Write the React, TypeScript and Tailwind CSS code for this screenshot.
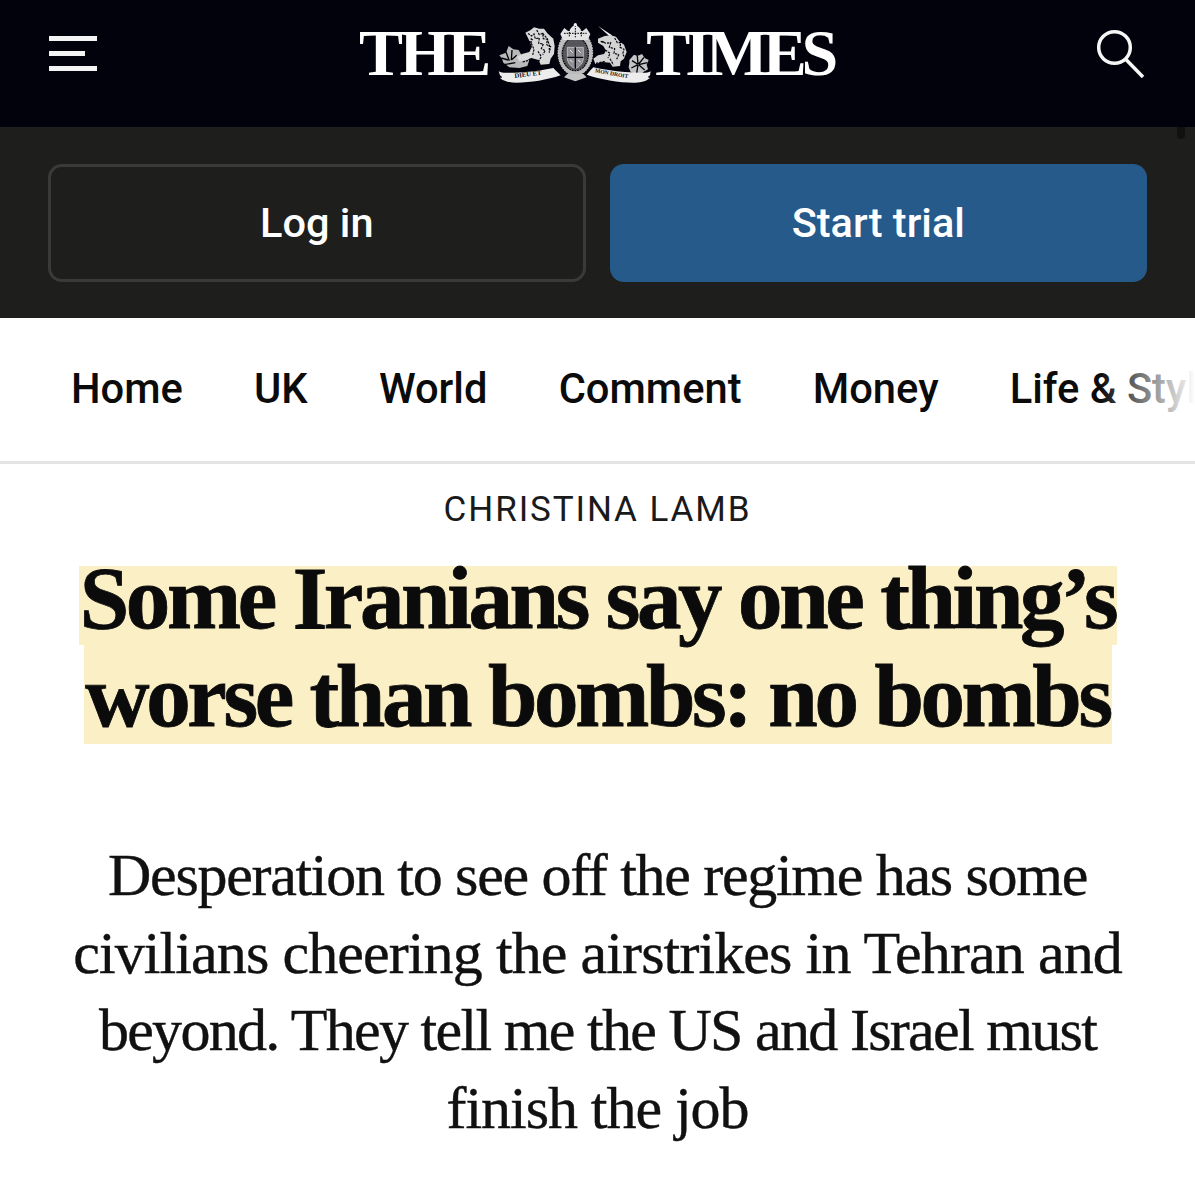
const NAV = ["Home", "UK", "World", "Comment", "Money", "Life & Style"];

const STANDFIRST = [
  { text: "Desperation to see off the regime has some", tracking: "tracking-[-1.3px]" },
  { text: "civilians cheering the airstrikes in Tehran and", tracking: "tracking-[-0.9px]" },
  { text: "beyond. They tell me the US and Israel must", tracking: "tracking-[-1.7px]" },
  { text: "finish the job", tracking: "tracking-[-1.05px]" },
];

// Royal crest between THE and TIMES, drawn at 3x so the coordinates line up with the zoomed reference.
function Crest() {
  return (
    <svg width="165" height="70" viewBox="0 0 495 210" className="ml-[4px] mr-[-10.5px] shrink-0">
      {/* rose */}
      <path d="M22 112l20-8 8-20 14 10 16 2 10 18 22 12-6 18-24 6-30-2-18-14-4-12z" fill="#b9b9b9" />
      <path d="M28 120l20 6M42 102l10 26M60 96l-2 30M74 112l-16 14M36 140l34-6" stroke="#02020c" strokeWidth="4" fill="none" />
      {/* lion */}
      <path d="M100 44l16-8 10-8 16 4 14 0 10 14 18 16 4 22-2 24-10 14-4 16-26 2-6-14-22-6-16 6-20 4-8-14 16-8 22-6 8-16-8-18-8-16z" fill="#d9d9d9" />
      <path d="M108 46l10 8 8-6 4 14 12-2-2 16 14 2-6 14 12 6-8 12M134 36l8 14 10-4 2 16 12 2-2 16 12 6-4 16M152 46l14 16 6 20 0 22M118 76l8 18-4 18M138 100l10 16-8 14M92 132l30-8" stroke="#02020c" strokeWidth="3.5" strokeDasharray="7 3" fill="none" />
      <path d="M116 62l6 4M108 72h12" stroke="#02020c" strokeWidth="4" />
      {/* shield and garter */}
      <ellipse cx="250" cy="104" rx="52" ry="68" fill="#bcbcbc" />
      <ellipse cx="250" cy="104" rx="52" ry="68" fill="none" stroke="#f0f0f0" strokeWidth="3" strokeDasharray="4 4" />
      <ellipse cx="250" cy="108" rx="39" ry="50" fill="#55555a" stroke="#02020c" strokeWidth="4" />
      <ellipse cx="250" cy="108" rx="39" ry="50" fill="none" stroke="#e6e6e6" strokeWidth="2" strokeDasharray="3 5" />
      <path d="M226 88h48v32c0 16-12 26-24 32-12-6-24-16-24-32z" fill="#8e8e93" stroke="#dcdcdc" strokeWidth="2" />
      <path d="M250 88v64M226 118h48" stroke="#02020c" strokeWidth="4" />
      <path d="M234 96l8 8M258 96l8 8M234 126l8 6M258 126l8 6" stroke="#e8e8e8" strokeWidth="3" />
      <path d="M205 48l12-18 12 10 10-12 11-10 11 10 10 12 12-10 12 18-8 18h-74z" fill="#e4e4e4" />
      <path d="M216 46h68M232 34v24M250 22v36M268 34v24" stroke="#02020c" strokeWidth="3" strokeDasharray="5 3" />
      <circle cx="250" cy="20" r="5" fill="#f0f0f0" />
      <path d="M216 178l34 12 34-12-10-10h-48z" fill="#c4c4c4" />
      {/* unicorn */}
      <path d="M318 24l42 28-4 6z" fill="#f0f0f0" />
      <path d="M318 62l20-8 18-2 16 4 10 14 14 10 8 22-8 20-10 8-2 14-22 2-8-12-22-2-22 6-6-16 14-10 18-4 6-10-8-14-16-10z" fill="#d4d4d4" />
      <path d="M326 70l16 6 14-2-4 14 16 4-2 14 14 4-6 14M368 60l8 14 10 0-2 14 12 6-4 14 6 10M340 96l14 10-6 14M312 136l28-6M354 122l10 18" stroke="#02020c" strokeWidth="3.5" strokeDasharray="7 3" fill="none" />
      <path d="M330 70l6 3" stroke="#02020c" strokeWidth="4" />
      {/* thistle */}
      <path d="M412 126l14-16 10 4 14-6 8 12 12 6-6 14 4 14-14 8-10 12-14-6-14-6-6-14 2-14z" fill="#c4c4c4" />
      <path d="M420 128l16 10M436 114l2 24M456 118l-16 20M466 134l-26 6M458 156l-18-16M434 166l4-26M418 150l20-10" stroke="#02020c" strokeWidth="4" fill="none" />
      {/* motto ribbons */}
      <path d="M20 160c10 6 24 4 36 4 30 0 70-2 128-14l8 8 14 14c-40 14-90 22-132 22-18 0-36-2-50-14 8-2 8-2 0-8z" fill="#ededed" />
      <path d="M476 160c-10 6-24 4-36 4-30 0-78-4-136-16l-8 8-12 14c40 14 98 24 140 24 18 0 36-2 50-14-8-2-8-2 0-8z" fill="#ededed" />
      <text x="68" y="180" fontFamily="Liberation Serif" fontSize="20" fontWeight="700" fill="#111" transform="rotate(-7 68 180)">DIEU ET</text>
      <text x="308" y="163" fontFamily="Liberation Serif" fontSize="17" fontWeight="700" fill="#111" transform="rotate(10 308 163)">MON DROIT</text>
    </svg>
  );
}

export default function App() {
  return (
    <div className="relative h-[1200px] w-[1195px] overflow-hidden bg-white font-['Roboto',sans-serif]">
      <header className="flex h-[127px] items-center justify-between bg-[#02020c] pb-[21px] pl-[49px] pr-[50px]">
        <div className="flex w-[48px] flex-col gap-[10px]">
          <span className="h-[5px] w-full bg-[#f4f4f4]" />
          <span className="h-[5px] w-[36px] bg-[#f4f4f4]" />
          <span className="h-[5px] w-full bg-[#f4f4f4]" />
        </div>
        <div className="flex items-center font-['Liberation_Serif',serif] text-[66px] font-bold leading-none text-white">
          <span className="tracking-[-3.5px]">THE</span>
          <Crest />
          <span className="tracking-[-5.2px]">TIMES</span>
        </div>
        <svg width="50" height="50" viewBox="0 0 50 50" fill="none" stroke="#f6f6f6" strokeWidth="3.5">
          <circle cx="19.5" cy="19.5" r="15.8" />
          <path d="M30.5 31L48 49" />
        </svg>
      </header>

      {/* dark nub left by the scroll indicator in the capture */}
      <div className="absolute left-[1177px] top-[127px] h-[12px] w-[8px] rounded-b-[4px] bg-[#111110]" />

      <div className="grid h-[191px] grid-cols-2 gap-[24px] bg-[#1e1e1c] px-[48px] pt-[37px]">
        <button className="h-[118px] rounded-[14px] border-[3px] border-[#3a3a38] text-[41.5px] font-medium text-white">
          Log in
        </button>
        <button className="h-[118px] rounded-[14px] bg-[#265a8a] text-[41.5px] font-medium text-white">
          Start trial
        </button>
      </div>

      <nav className="relative flex h-[146px] items-center gap-[71.2px] overflow-hidden whitespace-nowrap border-b-[3px] border-[#e4e4e4] pl-[71px] text-[41.7px] font-medium text-[#0b0b0b]">
        {NAV.map((item) => (
          <span key={item}>{item}</span>
        ))}
        <div className="absolute right-0 top-0 h-full w-[95px] bg-gradient-to-r from-transparent to-white" />
      </nav>

      <p className="mt-[26px] text-center text-[35px] leading-[40px] tracking-[1.9px] text-[#1a1a1a]">
        CHRISTINA LAMB
      </p>

      <h1 className="mt-[36px] font-['Liberation_Serif',serif] text-[89px] font-bold tracking-[-3.4px] text-[#0b0b0b] [-webkit-text-stroke:0.8px_#0b0b0b]">
        <span className="mx-auto block h-[79px] w-[1038px] whitespace-nowrap bg-[#fbefc6] text-center leading-[64px]">
          Some Iranians say one thing’s
        </span>
        <span className="mx-auto block h-[99px] w-[1028px] whitespace-nowrap bg-[#fbefc6] text-center leading-[102px]">
          worse than bombs: no bombs
        </span>
      </h1>

      <p className="mt-[93px] text-center font-['Liberation_Serif',serif] text-[60px] leading-[77.5px] text-[#111] [-webkit-text-stroke:0.4px_#111]">
        {STANDFIRST.map((line) => (
          <span key={line.text} className={`block whitespace-nowrap ${line.tracking}`}>
            {line.text}
          </span>
        ))}
      </p>
    </div>
  );
}
